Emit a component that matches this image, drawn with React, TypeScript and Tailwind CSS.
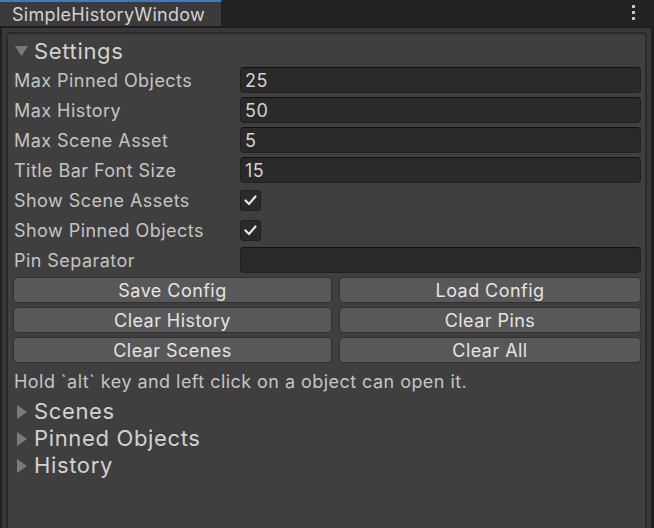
import React from "react";

const font = { fontFamily: "Inter, 'Noto Sans', sans-serif" };

function DownTri() {
  return (
    <svg width="13" height="12" viewBox="0 0 13 12" className="shrink-0">
      <polygon points="0,1 13,1 6.5,11" fill="#7a7a7a" />
    </svg>
  );
}
function RightTri() {
  return (
    <svg width="12" height="14" viewBox="0 0 12 14" className="shrink-0">
      <polygon points="1,0 11,7 1,14" fill="#7a7a7a" />
    </svg>
  );
}

function Check() {
  return (
    <div className="w-[21px] h-[21px] rounded-[3px] bg-[#2a2a2a] border border-[#1f1f1f] flex items-center justify-center">
      <svg width="13" height="11" viewBox="0 0 13 11">
        <polyline points="1.5,5.5 5,9 11.5,1.5" fill="none" stroke="#e6e6e6" strokeWidth="2.2" strokeLinecap="round" strokeLinejoin="round" />
      </svg>
    </div>
  );
}

function Input({ value }: { value?: string }) {
  return (
    <div className="h-[26px] flex-1 rounded-[4px] bg-[#2a2a2a] border border-[#212121] border-t-[#111111] flex items-center pl-[4px] text-[18px] tracking-[0.45px] text-[#d2d2d2]">
      {value}
    </div>
  );
}

function Row({ label, children }: { label: string; children: React.ReactNode }) {
  return (
    <div className="flex items-center h-[26px]">
      <div className="w-[227px] pl-[1px] pt-[1px] text-[18px] tracking-[0.45px] text-[#c4c4c4]">{label}</div>
      <div className="flex-1 flex items-center">{children}</div>
    </div>
  );
}

function Btn({ label }: { label: string }) {
  return (
    <div className="h-[26px] rounded-[4px] bg-[#585858] border border-[#303030] flex items-center justify-center text-[18px] tracking-[0.45px] text-[#e4e4e4]">
      {label}
    </div>
  );
}

function Fold({ label }: { label: string }) {
  return (
    <div className="h-[27px] flex items-center gap-[6px] pl-[3px] text-[22px] tracking-[0.65px] text-[#d2d2d2]">
      <RightTri />
      <span>{label}</span>
    </div>
  );
}

export default function App() {
  return (
    <div style={font} className="w-[654px] h-[528px] bg-[#383838] flex flex-col overflow-hidden">
      {/* Tab bar */}
      <div className="h-[28px] bg-[#232323] flex items-stretch border-b-[2px] border-[#1e1e1e] shrink-0">
        <div className="w-[222px] bg-[#3b3b3b] border-t-[2px] border-[#3a7bc8] border-r border-r-[#1e1e1e] flex items-center pl-[12px] text-[18px] tracking-[0.3px] text-[#d2d2d2]">
          SimpleHistoryWindow
        </div>
        <div className="flex-1" />
        <div className="w-[22px] flex flex-col items-center pt-[5px] gap-[3px] mr-[10px]">
          <div className="w-[3px] h-[3px] bg-[#c4c4c4]" />
          <div className="w-[3px] h-[3px] bg-[#c4c4c4]" />
          <div className="w-[3px] h-[3px] bg-[#c4c4c4]" />
        </div>
      </div>
      {/* Window body */}
      <div className="flex-1 border-l-2 border-r-[3px] border-[#1f1f1f] pt-[4px] px-[4px] flex flex-col">
        <div className="flex-1 rounded-t-[5px] border-2 border-b-0 border-[#2a2a2a] bg-[#3f3f3f] pl-[5px] pr-[4px] flex flex-col">
          <div className="h-[33px] pt-[1px] flex items-center gap-[6px] pl-[2px] text-[22px] tracking-[0.65px] text-[#d2d2d2]">
            <DownTri />
            <span>Settings</span>
          </div>
          <div className="flex flex-col gap-[4px]">
            <Row label="Max Pinned Objects"><Input value="25" /></Row>
            <Row label="Max History"><Input value="50" /></Row>
            <Row label="Max Scene Asset"><Input value="5" /></Row>
            <Row label="Title Bar Font Size"><Input value="15" /></Row>
            <Row label="Show Scene Assets"><Check /></Row>
            <Row label="Show Pinned Objects"><Check /></Row>
            <Row label="Pin Separator"><Input /></Row>
            <div className="grid grid-cols-[319px_302px] gap-x-[7px] gap-y-[4px]">
              <Btn label="Save Config" />
              <Btn label="Load Config" />
              <Btn label="Clear History" />
              <Btn label="Clear Pins" />
              <Btn label="Clear Scenes" />
              <Btn label="Clear All" />
            </div>
          </div>
          <div className="mt-[4px] h-[28px] flex items-center pl-[1px] text-[18px] tracking-[0.45px] text-[#c4c4c4]">
            Hold `alt` key and left click on a object can open it.
          </div>
          <div className="mt-[3px] flex flex-col">
            <Fold label="Scenes" />
            <Fold label="Pinned Objects" />
            <Fold label="History" />
          </div>
        </div>
      </div>
    </div>
  );
}
